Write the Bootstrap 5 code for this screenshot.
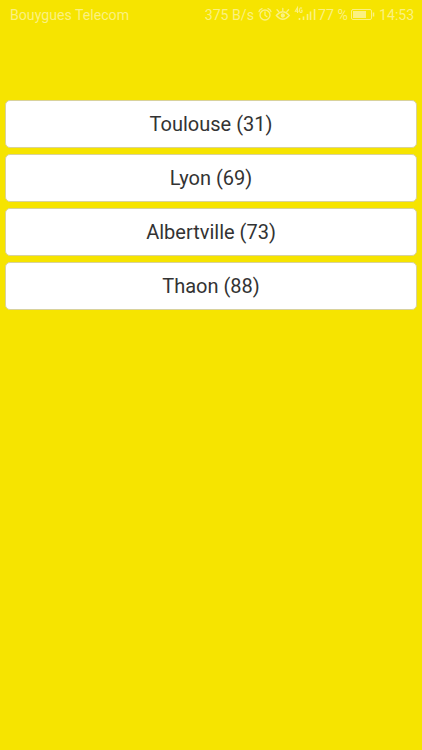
<!DOCTYPE html>
<html lang="fr">
<head>
<meta charset="utf-8">
<meta name="viewport" content="width=device-width, initial-scale=1">
<title>Villes</title>
<link href="https://cdn.jsdelivr.net/npm/bootstrap@5.3.0/dist/css/bootstrap.min.css" rel="stylesheet">
<style>
body{background:#f6e400;font-family:Roboto,"Liberation Sans",sans-serif;overflow:hidden}
.status{height:30px;color:#fbf181;font-size:14.15px;line-height:30px;padding:0 9px 0 10px;white-space:nowrap}
.status svg{display:block;flex:none}
.clock{width:34px}
.cities{padding:70px 5px 0;gap:6px}
.city{height:48px;background:#fff;border:1px solid #d8d29c;border-radius:5px;color:#333;font-size:20px;line-height:24px;padding:0}
.city:hover{background:#fff;color:#333;border-color:#d8d29c}
</style>
</head>
<body>
<header class="status d-flex align-items-center">
  <span class="me-auto">Bouygues Telecom</span>
  <span>375 B/s</span>
  <svg class="ms-1" width="121" height="30" viewBox="258 0 121 30" fill="none" stroke="currentColor" stroke-width="1.300" stroke-linecap="round">
    <circle cx="265" cy="15" r="5"/>
    <path d="M265 12v3.200l2 1.500M259 11.600q.3-2 3-3M271 11.600q-.3-2-3-3"/>
    <path d="M276.300 15.500q6.500-7.500 13 0q-6.500 7.500-13 0zM282.800 11V8.500M278.700 11.500l-1.700-1.800M286.900 11.500l1.700-1.800"/>
    <circle cx="282.800" cy="15.500" r="1.500" fill="currentColor"/>
    <g stroke-width="1.100" stroke-linecap="butt"><path d="M297.500 13V7.500L295.300 11.300H298.600M302 8.300Q299.600 6.900 299.600 10.200T302 12V10.300H301"/></g>
    <path d="M299.500 20v-2M303.500 20v-3.500M307.500 20v-6M310.500 20v-8.500M314.500 20V9" stroke-width="1.600" stroke-linecap="butt"/>
    <text x="318" y="20" font-family="Roboto" font-size="14.150" fill="currentColor" stroke="none">77 %</text>
    <rect x="351.500" y="9.500" width="20" height="10" rx="1.500" stroke-width="1"/>
    <path d="M353 11h13v7h-13z" fill="currentColor" stroke="none"/>
    <path d="M373.500 12.500v4" stroke-width="1.500" stroke-linecap="butt"/>
  </svg>
  <span class="clock">14:53</span>
</header>
<main class="cities d-flex flex-column">
  <button type="button" class="btn city w-100">Toulouse (31)</button>
  <button type="button" class="btn city w-100">Lyon (69)</button>
  <button type="button" class="btn city w-100">Albertville (73)</button>
  <button type="button" class="btn city w-100">Thaon (88)</button>
</main>
<script src="https://cdn.jsdelivr.net/npm/bootstrap@5.3.0/dist/js/bootstrap.bundle.min.js"></script>
</body>
</html>
